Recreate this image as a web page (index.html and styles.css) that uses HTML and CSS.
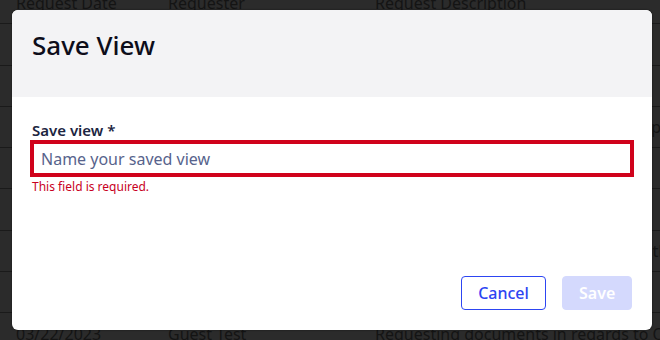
FILE: index.html
```html
<!DOCTYPE html>
<html lang="en">
<head>
    <meta charset="UTF-8">
    <title>Save View</title>
    <link rel="stylesheet" href="styles.css">
</head>
<body>
    <div class="table">
        <div class="row head">
            <div class="cell date">Request Date</div>
            <div class="cell who">Requester</div>
            <div class="cell desc">Request Description</div>
        </div>
        <div class="row"><div class="cell date">03/20/2023</div><div class="cell who">Guest Test</div><div class="cell desc">Requesting documents</div></div>
        <div class="row"><div class="cell date">03/20/2023</div><div class="cell who">Guest Test</div><div class="cell desc">Requesting records</div></div>
        <div class="row"><div class="cell date">03/21/2023</div><div class="cell who">Guest Test</div><div class="cell desc">Requesting a copy of records for the phone</div></div>
        <div class="row"><div class="cell date">03/21/2023</div><div class="cell who">Guest Test</div><div class="cell desc">Requesting documents</div></div>
        <div class="row"><div class="cell date">03/21/2023</div><div class="cell who">Guest Test</div><div class="cell desc">Requesting documents</div></div>
        <div class="row"><div class="cell date">03/22/2023</div><div class="cell who">Guest Test</div><div class="cell desc">Requesting documents in regards to the loan</div></div>
        <div class="row"><div class="cell date">03/22/2023</div><div class="cell who">Guest Test</div><div class="cell desc">Requesting documents</div></div>
        <div class="row"><div class="cell date">03/22/2023</div><div class="cell who">Guest Test</div><div class="cell desc">Requesting documents in regards to Open Records</div></div>
    </div>

    <div class="modal">
        <div class="modal-header">
            <h1>Save View</h1>
        </div>
        <div class="modal-body">
            <label for="view_name">Save view *</label>
            <input id="view_name" class="field invalid" type="text" placeholder="Name your saved view">
            <div class="error">This field is required.</div>
        </div>
        <div class="modal-footer">
            <button class="btn btn-outline">Cancel</button>
            <button class="btn btn-primary" disabled>Save</button>
        </div>
    </div>
</body>
</html>
```
FILE: styles.css
```css
* {
    margin: 0;
    padding: 0;
    box-sizing: border-box;
}
html, body {
    width: 100%;
    height: 100%;
}
body {
    display: flow-root;
    background-color: #2b2b2b;
    font-family: "Noto Sans", "Open Sans", sans-serif;
    overflow: hidden;
    position: relative;
}

/* table behind the backdrop */
.table {
    margin-top: -17px;
}
.row {
    display: flex;
    height: 41.3px;
    align-items: center;
    border-bottom: 1px solid #1a1a1a;
    white-space: nowrap;
    color: #141414;
    font-size: 16px;
}
.cell {
    overflow: hidden;
}
.date {
    width: 168px;
    padding-left: 16px;
    flex-shrink: 0;
}
.who {
    width: 207px;
    flex-shrink: 0;
}
.desc {
    flex-grow: 1;
}

/* dialog */
.modal {
    position: absolute;
    left: 12px;
    top: 10px;
    width: 640px;
    height: 320px;
    background-color: #fff;
    border-radius: 6px;
    overflow: hidden;
    display: flex;
    flex-direction: column;
    box-shadow: 0 0 2px rgba(0, 0, 0, 0.6);
}
.modal-header {
    height: 87px;
    background-color: #f3f3f5;
    padding: 17px 20px 0;
}
.modal-header h1 {
    font-size: 26px;
    line-height: 36px;
    font-weight: 500;
    color: #0d0d1a;
}
.modal-body {
    padding: 23px 20px 0;
}
.modal-body label {
    display: block;
    font-size: 15px;
    line-height: 20px;
    font-weight: 600;
    color: #1c2541;
}
.field {
    display: block;
    width: 100%;
    height: 33px;
    margin-top: 2px;
    padding: 0 7px;
    font-family: inherit;
    font-size: 16px;
    color: #1c2541;
    border: 2px solid #8a90a8;
    outline: none;
}
.field::placeholder {
    color: #57638c;
}
.field.invalid {
    border-color: #d0021b;
    box-shadow: 0 0 0 2px #d0021b;
}
.error {
    margin-top: 4px;
    font-size: 12px;
    line-height: 16px;
    color: #c8001e;
}
.modal-footer {
    margin-top: auto;
    display: flex;
    justify-content: flex-end;
    gap: 16px;
    padding: 0 20px 20px;
}
.btn {
    height: 34px;
    border-radius: 4px;
    font-family: inherit;
    font-size: 16px;
    font-weight: 500;
    padding: 0 16px;
}
.btn-outline {
    width: 85px;
    background-color: #fff;
    border: 1px solid #2d45f2;
    color: #2d45f2;
}
.btn-primary {
    width: 70px;
    background-color: #d4d9fd;
    border: 1px solid #d4d9fd;
    color: #fff;
    font-weight: 600;
}
```
